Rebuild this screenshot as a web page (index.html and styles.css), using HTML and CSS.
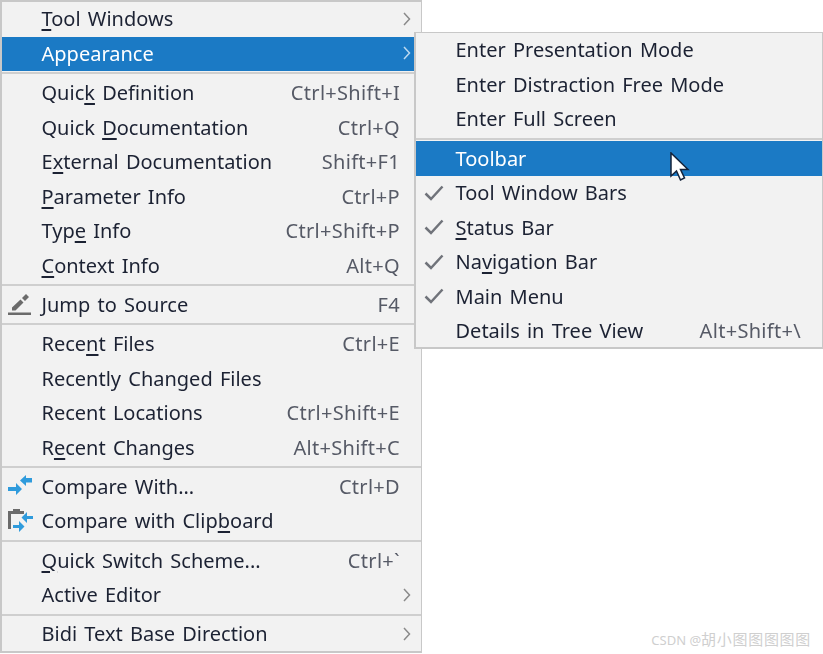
FILE: index.html
```html
<!DOCTYPE html>
<html lang="en">
<head>
<meta charset="utf-8">
<title>Appearance menu</title>
<link rel="stylesheet" href="styles.css">
</head>
<body>
<div class="screen">
  <div class="menu main-menu">
    <div class="row"><span class="icon"></span><span class="label"><u>T</u>ool Windows</span><svg class="chev" viewBox="0 0 8 14"><path d="M1 1l5.500 6L1 13"/></svg></div>
    <div class="row active"><span class="icon"></span><span class="label">Appearance</span><svg class="chev" viewBox="0 0 8 14"><path d="M1 1l5.500 6L1 13"/></svg></div>
    <div class="sep"></div>
    <div class="row"><span class="icon"></span><span class="label">Quic<u>k</u> Definition</span><span class="key">Ctrl+Shift+I</span></div>
    <div class="row"><span class="icon"></span><span class="label">Quick <u>D</u>ocumentation</span><span class="key">Ctrl+Q</span></div>
    <div class="row"><span class="icon"></span><span class="label">E<u>x</u>ternal Documentation</span><span class="key">Shift+F1</span></div>
    <div class="row"><span class="icon"></span><span class="label"><u>P</u>arameter Info</span><span class="key">Ctrl+P</span></div>
    <div class="row"><span class="icon"></span><span class="label">Typ<u>e</u> Info</span><span class="key">Ctrl+Shift+P</span></div>
    <div class="row"><span class="icon"></span><span class="label"><u>C</u>ontext Info</span><span class="key">Alt+Q</span></div>
    <div class="sep"></div>
    <div class="row"><span class="icon"><svg viewBox="0 0 26 24" width="26" height="24"><path class="gray" d="M15 6l4-4 3 3-4 4zM13.500 7.500l3 3-8 8H5v-3z"/><path class="gray" d="M1 20.500h23v2.500H1z"/></svg></span><span class="label">Jump to Source</span><span class="key">F4</span></div>
    <div class="sep"></div>
    <div class="row"><span class="icon"></span><span class="label">Rece<u>n</u>t Files</span><span class="key">Ctrl+E</span></div>
    <div class="row"><span class="icon"></span><span class="label">Recently Changed Files</span></div>
    <div class="row"><span class="icon"></span><span class="label">Recent Locations</span><span class="key">Ctrl+Shift+E</span></div>
    <div class="row"><span class="icon"></span><span class="label">R<u>e</u>cent Changes</span><span class="key">Alt+Shift+C</span></div>
    <div class="sep"></div>
    <div class="row"><span class="icon"><svg viewBox="0 0 26 24" width="26" height="24"><path class="blue" d="M1 13h8V9l6 6-6 6v-4H1zM25 4h-6V1l-6 5.500 6 5.500V8.500h6z"/></svg></span><span class="label">Compare With...</span><span class="key">Ctrl+D</span></div>
    <div class="row"><span class="icon"><svg viewBox="0 0 26 26" width="26" height="26"><path class="gray" d="M1 3h5V1h7v2h4v3H4v15H1z"/><path class="blue" d="M6 17h6v-4l5.500 5.500L12 24v-4H6zM26 8h-6V4l-5.500 5.500L20 15v-4h6z"/></svg></span><span class="label">Compare with Clip<u>b</u>oard</span></div>
    <div class="sep"></div>
    <div class="row"><span class="icon"></span><span class="label"><u>Q</u>uick Switch Scheme...</span><span class="key">Ctrl+`</span></div>
    <div class="row"><span class="icon"></span><span class="label">Active Editor</span><svg class="chev" viewBox="0 0 8 14"><path d="M1 1l5.500 6L1 13"/></svg></div>
    <div class="sep"></div>
    <div class="row"><span class="icon"></span><span class="label">Bidi Text Base Direction</span><svg class="chev" viewBox="0 0 8 14"><path d="M1 1l5.500 6L1 13"/></svg></div>
  </div>

  <div class="menu sub-menu">
    <div class="row"><span class="icon"></span><span class="label">Enter Presentation Mode</span></div>
    <div class="row"><span class="icon"></span><span class="label">Enter Distraction Free Mode</span></div>
    <div class="row"><span class="icon"></span><span class="label">Enter Full Screen</span></div>
    <div class="sep"></div>
    <div class="row active"><span class="icon"></span><span class="label">Toolbar</span></div>
    <div class="row"><span class="icon"><svg class="check" viewBox="0 0 20 16"><path d="M1.500 8.500l5.500 5.500L18.500 1.500"/></svg></span><span class="label">Tool Window Bars</span></div>
    <div class="row"><span class="icon"><svg class="check" viewBox="0 0 20 16"><path d="M1.500 8.500l5.500 5.500L18.500 1.500"/></svg></span><span class="label"><u>S</u>tatus Bar</span></div>
    <div class="row"><span class="icon"><svg class="check" viewBox="0 0 20 16"><path d="M1.500 8.500l5.500 5.500L18.500 1.500"/></svg></span><span class="label">Na<u>v</u>igation Bar</span></div>
    <div class="row"><span class="icon"><svg class="check" viewBox="0 0 20 16"><path d="M1.500 8.500l5.500 5.500L18.500 1.500"/></svg></span><span class="label">Main Menu</span></div>
    <div class="row"><span class="icon"></span><span class="label">Details in Tree View</span><span class="key">Alt+Shift+\</span></div>
  </div>

  <svg class="cursor" viewBox="0 0 20 30" width="20" height="30"><path d="M1 1v23l5.500-5 4 9 4-2-4-8.500H18z" fill="#fff" stroke="#15233a" stroke-width="1.500"/></svg>
  <div class="watermark"><span class="mark-latin">CSDN @</span>胡小图图图图图</div>
</div>
</body>
</html>
```
FILE: styles.css
```css
* { box-sizing: border-box; }
html, body { margin: 0; padding: 0; background: #fff; }
.screen {
  position: relative;
  width: 823px;
  height: 654px;
  overflow: hidden;
  font-family: "Noto Sans", "Open Sans", sans-serif;
  font-size: 20px;
  color: #1c2233;
}
.menu {
  display: flex;
  flex-direction: column;
  background: #f2f2f2;
}
.main-menu {
  width: 422px;
  height: 653px;
  border: 2px solid #c8c8c8;
  border-right-width: 1px;
}
.sub-menu {
  position: absolute;
  left: 414px;
  top: 32px;
  width: 409px;
  height: 317px;
  border: 1px solid #c8c8c8;
  border-width: 1px 1px 2px 2px;
}
.row {
  display: flex;
  align-items: center;
  flex: none;
  height: 34.500px;
  white-space: nowrap;
  padding-right: 21px;
  padding-bottom: 1px;
}
.row .chev { margin-right: -11px; }
.sep {
  flex: none;
  height: 4.750px;
  display: flex;
  align-items: center;
}
.sep::before {
  content: "";
  flex: 1;
  height: 2px;
  background: #cfcfcf;
}
.icon {
  flex: none;
  width: 39.500px;
  display: flex;
  align-items: center;
  padding-left: 5px;
}
.label {
  flex: 1;
  word-spacing: 2px;
  filter: blur(0.35px);
}
.label u {
  text-decoration-thickness: 2px;
  text-underline-offset: 3px;
}
.key {
  flex: none;
  color: #565a66;
  letter-spacing: 0.300px;
  filter: blur(0.35px);
}
.chev {
  flex: none;
  width: 8px;
  height: 14px;
  fill: none;
  stroke: #8a8a8a;
  stroke-width: 1.500;
}
.active {
  background: #1b7ac5;
  color: #fff;
}
.active .chev { stroke: #bcd9f0; }
.gray { fill: #6b6b6b; }
.blue { fill: #2f9bdc; }
.check {
  width: 20px;
  height: 16px;
  fill: none;
  stroke: #70737a;
  stroke-width: 2.500;
  margin-left: 3px;
}
.cursor {
  position: absolute;
  left: 670px;
  top: 152px;
}
.watermark {
  position: absolute;
  right: 12px;
  top: 628px;
  font-family: "Noto Sans", "Noto Sans CJK SC", sans-serif;
  font-size: 15px;
  letter-spacing: 0.700px;
  color: #cfcfcf;
}
.mark-latin {
  font-size: 13px;
  letter-spacing: 0;
}
```
